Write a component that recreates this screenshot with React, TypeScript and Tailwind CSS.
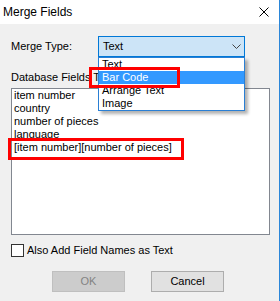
import React from "react";

export default function App() {
  return (
    <div className="relative w-[280px] h-[301px] overflow-hidden bg-[#f0f0f0] border-r border-[#2b86d8] font-['Liberation_Sans',Arial,sans-serif] text-[11px] leading-[13px] text-black">
      {/* Title bar */}
      <div className="h-[24px] bg-white flex items-center justify-between pl-[3px] pr-[10px]">
        <span className="text-[12px]">Merge Fields</span>
        <svg width="10" height="10" viewBox="0 0 10 10">
          <path d="M0.5 0.5 L9.5 9.5 M9.5 0.5 L0.5 9.5" stroke="#000" strokeWidth="1" />
        </svg>
      </div>

      {/* Body */}
      <div className="pl-[11px] pt-[12px]">
        <div className="flex items-center h-[21px]">
          <span className="w-[87px]">Merge Type:</span>
          <div className="w-[147px] h-[21px] border border-[#0078d7] bg-[#cce4f7] flex items-center justify-between pl-[4px] pr-[3px]">
            <span>Text</span>
            <svg width="9" height="5" viewBox="0 0 9 5">
              <path d="M0.5 0.5 L4.5 4.5 L8.5 0.5" stroke="#444" strokeWidth="1" fill="none" />
            </svg>
          </div>
        </div>

        <div className="mt-[14px] h-[13px] w-[87px] overflow-hidden whitespace-nowrap">Database Fields Th</div>

        <div className="mt-[4px] w-[259px] h-[147px] border border-[#828790] bg-white pl-[2px]">
          <div>item number</div>
          <div>country</div>
          <div>number of pieces</div>
          <div>language</div>
          <div>[item number][number of pieces]</div>
        </div>

        <div className="mt-[9px] flex items-center gap-[3px] h-[13px]">
          <div className="w-[13px] h-[13px] border border-[#333333] bg-white" />
          <span>Also Add Field Names as Text</span>
        </div>

        <div className="mt-[14px] flex pl-[41px] gap-[26px]">
          <div className="w-[73px] h-[21px] flex items-center justify-center bg-[#cccccc] border border-[#bfbfbf] text-[#838383]">
            OK
          </div>
          <div className="w-[73px] h-[21px] flex items-center justify-center bg-[#e1e1e1] border border-[#adadad]">
            Cancel
          </div>
        </div>
      </div>

      {/* Dropdown list overlay */}
      <div className="absolute left-[98px] top-[57px] w-[147px] h-[54px] border border-[#2a7fd4] bg-white shadow-[3px_3px_3px_rgba(0,0,0,0.3)]">
        <div className="h-[13px] pl-[3px]">Text</div>
        <div className="h-[13px] pl-[3px] bg-[#3399ff] text-white">Bar Code</div>
        <div className="h-[13px] pl-[3px]">Arrange Text</div>
        <div className="h-[13px] pl-[3px]">Image</div>
      </div>

      {/* Red annotation boxes */}
      <div className="absolute left-[89px] top-[67px] w-[91px] h-[21px] border-[3px] border-[#ff0000]" />
      <div className="absolute left-[8px] top-[138px] w-[176px] h-[22px] border-[3px] border-[#ff0000]" />
    </div>
  );
}
